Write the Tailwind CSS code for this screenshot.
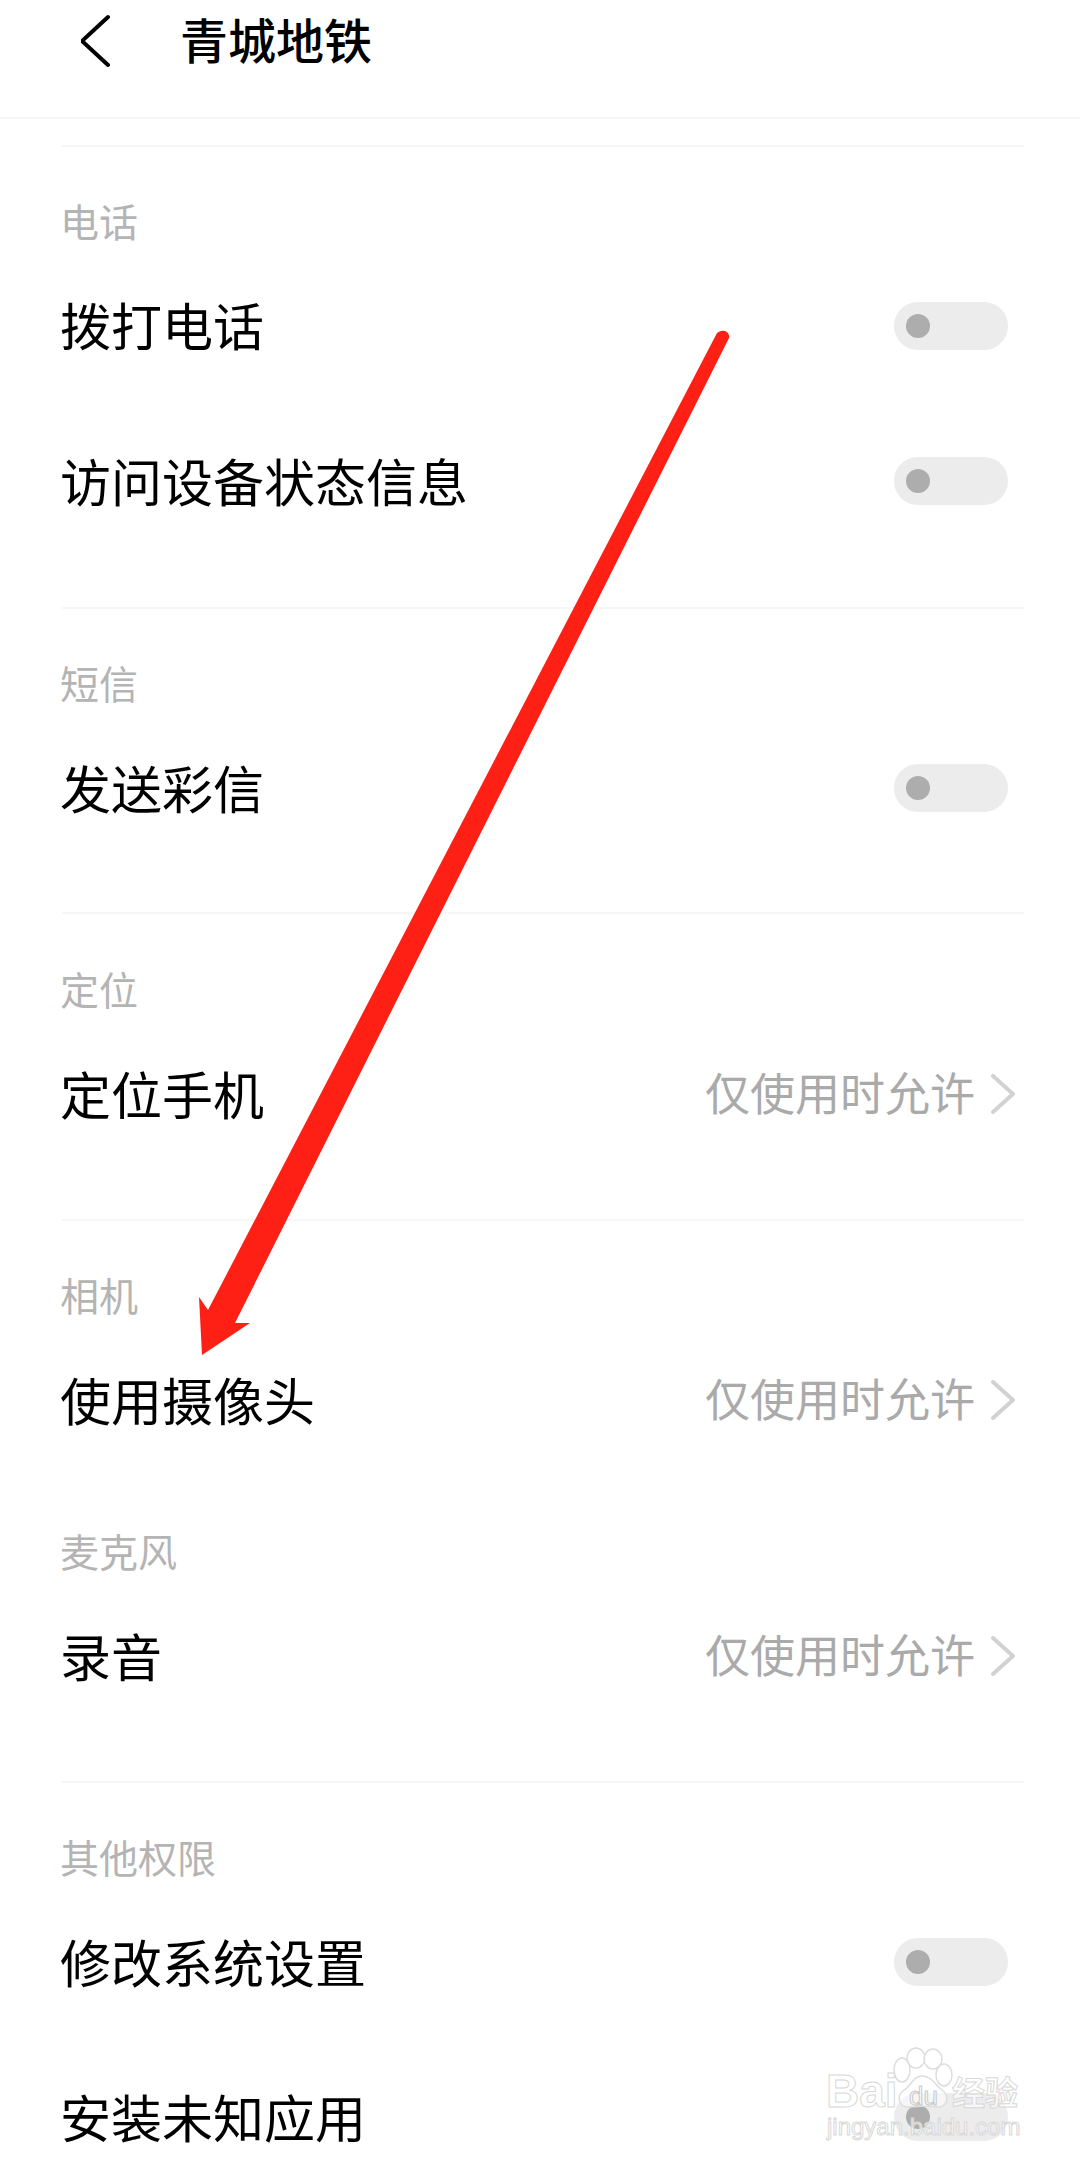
<!DOCTYPE html>
<html lang="zh-CN">
<head>
  <meta charset="UTF-8" />
  <title>青城地铁</title>
  <script src="https://cdn.jsdelivr.net/npm/@tailwindcss/browser@4"></script>
</head>
<body class="bg-white">
  <div class="relative h-[2163px] w-[1080px] overflow-hidden bg-white text-black font-['Noto_Sans_CJK_SC','Noto_Sans',sans-serif]">

    <!-- Header -->
    <div class="flex h-[119px] items-start border-b-2 border-[#f6f6f6]">
      <div class="flex h-[80px] items-center pl-[81px]">
        <svg class="h-[80px] w-[99px]" viewBox="0 0 99 80" fill="none" stroke="#000" stroke-width="4" stroke-linecap="round" stroke-linejoin="round">
          <path d="M27 17 L1 41 L27 65" />
        </svg>
      </div>
      <div class="flex h-[76px] items-center text-[48px] leading-none font-medium">青城地铁</div>
    </div>

    <div class="ml-[62px] w-[962px]">
      <!-- 电话 -->
      <div class="mt-[26px] border-t-2 border-[#f6f6f6] pb-[49px]">
        <div class="-ml-[2px] mt-[47px] flex h-[54px] -translate-y-[1px] items-center text-[39px] leading-none text-[#b4b4b4]">电话</div>
        <div class="-ml-[2px] flex h-[155px] items-center justify-between pr-[16px] text-[51px] leading-none">
          <span class="-translate-y-[1px]">拨打电话</span>
          <div class="flex h-[48px] w-[114px] items-center rounded-full bg-[#ececec] pl-[12px]"><div class="h-[24px] w-[24px] rounded-full bg-[#adadad]"></div></div>
        </div>
        <div class="-ml-[2px] flex h-[155px] items-center justify-between pr-[16px] text-[51px] leading-none">
          <span>访问设备状态信息</span>
          <div class="flex h-[48px] w-[114px] items-center rounded-full bg-[#ececec] pl-[12px]"><div class="h-[24px] w-[24px] rounded-full bg-[#adadad]"></div></div>
        </div>
      </div>

      <!-- 短信 -->
      <div class="border-t-2 border-[#f6f6f6] pb-[47px]">
        <div class="-ml-[2px] mt-[47px] flex h-[54px] -translate-y-[1px] items-center text-[39px] leading-none text-[#b4b4b4]">短信</div>
        <div class="-ml-[2px] flex h-[155px] items-center justify-between pr-[16px] text-[51px] leading-none">
          <span>发送彩信</span>
          <div class="flex h-[48px] w-[114px] items-center rounded-full bg-[#ececec] pl-[12px]"><div class="h-[24px] w-[24px] rounded-full bg-[#adadad]"></div></div>
        </div>
      </div>

      <!-- 定位 -->
      <div class="border-t-2 border-[#f6f6f6] pb-[48px]">
        <div class="-ml-[2px] mt-[48px] flex h-[54px] -translate-y-[1px] items-center text-[39px] leading-none text-[#b4b4b4]">定位</div>
        <div class="-ml-[2px] flex h-[155px] items-center justify-between pr-[9px] text-[51px] leading-none">
          <span>定位手机</span>
          <div class="flex -translate-y-[2px] items-center gap-[16px] text-[45px] text-[#aaaaaa]">
            <span>仅使用时允许</span>
            <svg class="h-[40px] w-[24px] translate-y-[2px]" viewBox="0 0 24 40" fill="none" stroke="#d2d2d2" stroke-width="4" stroke-linecap="round" stroke-linejoin="round"><path d="M2 2 L22 20 L2 38" /></svg>
          </div>
        </div>
      </div>

      <!-- 相机 -->
      <div class="border-t-2 border-[#f6f6f6] pb-[47px]">
        <div class="-ml-[2px] mt-[47px] flex h-[54px] -translate-y-[1px] items-center text-[39px] leading-none text-[#b4b4b4]">相机</div>
        <div class="-ml-[2px] flex h-[155px] items-center justify-between pr-[9px] text-[51px] leading-none">
          <span>使用摄像头</span>
          <div class="flex -translate-y-[2px] items-center gap-[16px] text-[45px] text-[#aaaaaa]">
            <span>仅使用时允许</span>
            <svg class="h-[40px] w-[24px] translate-y-[2px]" viewBox="0 0 24 40" fill="none" stroke="#d2d2d2" stroke-width="4" stroke-linecap="round" stroke-linejoin="round"><path d="M2 2 L22 20 L2 38" /></svg>
          </div>
        </div>
      </div>

      <!-- 麦克风 -->
      <div class="pb-[48px]">
        <div class="-ml-[2px] flex h-[54px] -translate-y-[1px] items-center text-[39px] leading-none text-[#b4b4b4]">麦克风</div>
        <div class="-ml-[2px] flex h-[155px] items-center justify-between pr-[9px] text-[51px] leading-none">
          <span>录音</span>
          <div class="flex -translate-y-[2px] items-center gap-[16px] text-[45px] text-[#aaaaaa]">
            <span>仅使用时允许</span>
            <svg class="h-[40px] w-[24px] translate-y-[2px]" viewBox="0 0 24 40" fill="none" stroke="#d2d2d2" stroke-width="4" stroke-linecap="round" stroke-linejoin="round"><path d="M2 2 L22 20 L2 38" /></svg>
          </div>
        </div>
      </div>

      <!-- 其他权限 -->
      <div class="border-t-2 border-[#f6f6f6]">
        <div class="-ml-[2px] mt-[47px] flex h-[54px] -translate-y-[1px] items-center text-[39px] leading-none text-[#b4b4b4]">其他权限</div>
        <div class="-ml-[2px] flex h-[155px] items-center justify-between pr-[16px] text-[51px] leading-none">
          <span>修改系统设置</span>
          <div class="flex h-[48px] w-[114px] items-center rounded-full bg-[#ececec] pl-[12px]"><div class="h-[24px] w-[24px] rounded-full bg-[#adadad]"></div></div>
        </div>
        <div class="-ml-[2px] flex h-[155px] items-center justify-between pr-[16px] text-[51px] leading-none">
          <span>安装未知应用</span>
          <div class="flex h-[48px] w-[114px] items-center rounded-full bg-[#ececec] pl-[12px]"><div class="h-[24px] w-[24px] rounded-full bg-[#adadad]"></div></div>
        </div>
      </div>
    </div>

    <!-- Red annotation arrow -->
    <svg class="absolute left-0 top-0 h-[2163px] w-[1080px]" viewBox="0 0 1080 2163" fill="none">
      <path fill="#ff2015" d="M717 333 Q722 329 727 332 Q731 336 728 340 L235 1323 L250 1323 L202 1355 L199 1297 L208 1310 Z" />
    </svg>

    <!-- Watermark -->
    <svg class="absolute left-[890px] top-[2040px] h-[80px] w-[70px]" viewBox="0 0 70 80" fill="#ffffff" fill-opacity="0.55" stroke="#dddddd" stroke-width="1.5">
      <ellipse cx="26" cy="18" rx="9" ry="10" />
      <ellipse cx="43" cy="19" rx="9" ry="10" />
      <ellipse cx="12" cy="30" rx="8" ry="12" />
      <ellipse cx="54" cy="35" rx="8" ry="11" />
      <path d="M32 36 C42 36 46 46 52 50 C60 56 58 68 46 67 C38 66 28 66 20 67 C8 68 6 56 14 50 C21 46 23 36 32 36 Z" />
    </svg>
    <div class="absolute left-[826px] top-[2066px] text-[46px] leading-[50px] font-bold font-['Liberation_Sans',sans-serif] text-white/60 [-webkit-text-stroke:1px_#d8d8d8]">Bai</div>
    <div class="absolute left-[909px] top-[2081px] text-[26px] leading-[30px] font-['Liberation_Sans',sans-serif] text-white/60 [-webkit-text-stroke:1px_#c8c8c8]">du</div>
    <div class="absolute left-[952px] top-[2071px] text-[33px] leading-[40px] font-bold text-white/60 [-webkit-text-stroke:1px_#d8d8d8]">经验</div>
    <div class="absolute left-[827px] top-[2112px] text-[24px] leading-[30px] font-['Liberation_Sans',sans-serif] text-white/60 [-webkit-text-stroke:1px_#d8d8d8]">jingyan.baidu.com</div>
  </div>
</body>
</html>
